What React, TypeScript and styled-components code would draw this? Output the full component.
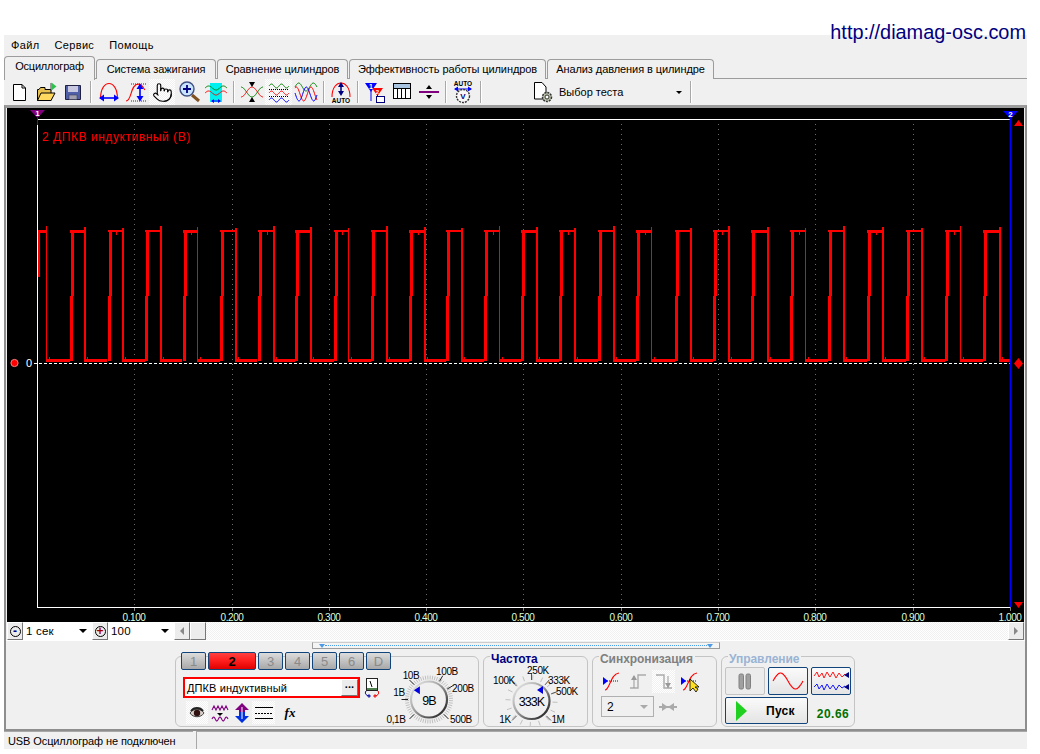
import styled, { createGlobalStyle } from "styled-components";
import { Pointer } from "lucide-react";

const GlobalStyle = createGlobalStyle`
    html, body {
        margin: 0;
        padding: 0;
        background: #fff;
        font-family: "Liberation Sans", Arial, sans-serif;
        font-size: 11px;
        color: #000;
    }
    * {
        box-sizing: border-box;
    }
`

const dither = `repeating-conic-gradient(#f0f0f0 0 25%, #fff 0 50%) 0 0 / 2px 2px`

const TopStrip = styled.div`
    height: 35px;
    display: flex;
    justify-content: flex-end;
    padding: 23px 14px 0 0;
    position: relative;
    z-index: 1;
`

const SiteLink = styled.a`
    font-size: 19.9px;
    line-height: 18px;
    height: 18px;
    color: #000080;
`

const Window = styled.div`
    width: 1023px;
    margin-left: 4px;
    background: #f0f0f0;
`

const MenuBar = styled.div`
    height: 21px;
    display: flex;
    align-items: center;
    gap: 15px;
    padding: 0 0 2px 7px;
`

const MenuItem = styled.span`
    font-size: 11px;
    letter-spacing: 0.35px;
`

const TabRow = styled.div`
    height: 23px;
    display: flex;
    align-items: flex-end;
    gap: 1px;
`

const Tab = styled.div<{ $w: number; $active?: boolean }>`
    width: ${p => p.$w}px;
    height: ${p => (p.$active ? 24 : 20)}px;
    margin-bottom: ${p => (p.$active ? -1 : 0)}px;
    border: 1px solid #9c9c9c;
    border-bottom: none;
    border-radius: 4px 4px 0 0;
    background: #f0f0f0;
    display: flex;
    align-items: center;
    justify-content: center;
    font-size: 11px;
    letter-spacing: ${p => (p.$active ? -0.2 : -0.08)}px;
    padding-bottom: ${p => (p.$active ? 5 : 2)}px;
    position: relative;
`

const ToolBar = styled.div`
    height: 27px;
    margin-top: -1px;
    border-top: 1px solid #9c9c9c;
    display: flex;
    align-items: center;
    padding-left: 1px;
`

const ToolButton = styled.div<{ $pressed?: boolean; $w?: number }>`
    width: ${p => p.$w ?? 27}px;
    height: 26px;
    flex: none;
    display: flex;
    align-items: center;
    justify-content: center;
    background: ${p => (p.$pressed ? dither : "transparent")};
`

const Separator = styled.div<{ $w: number }>`
    width: ${p => p.$w}px;
    height: 22px;
    flex: none;
    position: relative;
    &::after {
        content: "";
        display: block;
        width: 1px;
        height: 22px;
        margin: 0 auto;
        background: #a8a8a8;
        box-shadow: 1px 0 0 #fff;
    }
`

const TestPicker = styled.div`
    width: 205px;
    flex: none;
    display: flex;
    align-items: center;
    padding-left: 48px;
    gap: 2px;
    font-size: 11px;
`

const ArrowDown = styled.i<{ $color?: string }>`
    display: block;
    width: 0;
    height: 0;
    border-left: 4px solid transparent;
    border-right: 4px solid transparent;
    border-top: 4px solid ${p => p.$color ?? "#000"};
`

const TestArrow = styled(ArrowDown)`
    margin-left: 51px;
    border-left-width: 3px;
    border-right-width: 3px;
    border-top-width: 3px;
`

const Frame = styled.div`
    height: 626px;
    border: 2px solid #8e8e8e;
    border-top: 3px solid #9c9c9c;
    display: flex;
    flex-direction: column;
`

const ScopeWrap = styled.div`
    height: 514px;
    padding-left: 1px;
    flex: none;
`

const ScopeSvg = styled.svg`
    display: block;
`

const TimeBar = styled.div`
    height: 18px;
    margin-left: 1px;
    width: 1017px;
    display: flex;
    flex: none;
    background: ${dither};
`

const SquareButton = styled.div`
    width: 16px;
    height: 18px;
    flex: none;
    background: #ececec;
    border: 1px solid;
    border-color: #fff #777 #777 #fff;
    display: flex;
    align-items: center;
    justify-content: center;
`

const Combo = styled.div<{ $w: number }>`
    width: ${p => p.$w}px;
    flex: none;
    background: #fff;
    display: flex;
    align-items: center;
    justify-content: space-between;
    padding: 0 5px 0 3px;
    font-size: 11.5px;
    letter-spacing: 0.2px;
`

const ScrollSpacer = styled.div`
    flex: 1;
`

const RoundGlyph = styled.span<{ $color: string }>`
    width: 11px;
    height: 11px;
    border: 1px solid #000;
    border-radius: 50%;
    color: ${p => p.$color};
    font-size: 12px;
    font-weight: 700;
    line-height: 8px;
    text-align: center;
`

const Triangle = styled.i<{ $dir: "left" | "right" }>`
    display: block;
    width: 0;
    height: 0;
    border-top: 4px solid transparent;
    border-bottom: 4px solid transparent;
    border-${p => (p.$dir === "left" ? "right" : "left")}: 4px solid #888;
`

const Panel = styled.div`
    flex: 1;
    border-top: 1px solid #fff;
    display: flex;
    flex-direction: column;
`

const Splitter = styled.div`
    width: 408px;
    height: 7px;
    margin: 1px 0 0 306px;
    border: 1px solid #9c9c9c;
    border-top-color: #ccc;
    background: #f4f4f4;
    display: flex;
    align-items: center;
    justify-content: space-between;
    padding: 0 6px;
    position: relative;
    &::before {
        content: "";
        position: absolute;
        left: 12px;
        right: 12px;
        top: 2px;
        border-top: 1px dotted #4d9be8;
    }
`

const BlueDown = styled(ArrowDown)`
    border-left-width: 3px;
    border-right-width: 3px;
`

const GroupRow = styled.div`
    display: flex;
    gap: 4px;
    padding: 7px 0 0 169px;
`

const Group = styled.div<{ $w: number }>`
    width: ${p => p.$w}px;
    height: 71px;
    border: 1px solid #c4c4c4;
    border-radius: 6px;
    position: relative;
    display: flex;
`

const Legend = styled.span<{ $color: string }>`
    position: absolute;
    left: 6px;
    top: -4px;
    padding: 0 2px 0 1px;
    background: #f0f0f0;
    color: ${p => p.$color};
    font-size: 12px;
    line-height: 13px;
    font-weight: 700;
    letter-spacing: -0.05px;
`

const ChannelColumn = styled.div`
    width: 209px;
    flex: none;
    margin-top: -5px;
    padding-left: 5px;
`

const ChannelTabs = styled.div`
    display: flex;
    gap: 2px;
`

const ChannelTab = styled.div<{ $active?: boolean; $w: number }>`
    width: ${p => p.$w}px;
    height: 18px;
    flex: none;
    border: 1px solid #10447a;
    border-radius: 2px;
    background: ${p =>
        p.$active
            ? "linear-gradient(#ff4040, #ff2020 45%, #e00000)"
            : "linear-gradient(#dcdcdc, #a8a8a8)"};
    color: ${p => (p.$active ? "#000" : "#8a8a8a")};
    font-size: 13px;
    font-weight: ${p => (p.$active ? 700 : 400)};
    display: flex;
    align-items: center;
    justify-content: center;
`

const NameRow = styled.div`
    display: flex;
    align-items: center;
    margin: 7px 0 0 2px;
    gap: 4px;
`

const NameInput = styled.div`
    width: 177px;
    height: 21px;
    flex: none;
    border: 2px solid #f00;
    background: #fff;
    display: flex;
    align-items: center;
    justify-content: space-between;
    padding: 0 0 0 2px;
    font-size: 11px;
    letter-spacing: 0.1px;
`

const DotsButton = styled.div`
    width: 17px;
    height: 17px;
    background: #ececec;
    border: 1px solid;
    border-color: #fff #777 #777 #fff;
    font-size: 11px;
    font-weight: 700;
    line-height: 9px;
    text-align: center;
`

const ChannelTools = styled.div`
    display: flex;
    align-items: center;
    margin: 3px 0 0 5px;
    height: 23px;
`

const SmallTool = styled.div<{ $w: number; $pressed?: boolean }>`
    width: ${p => p.$w}px;
    height: 23px;
    flex: none;
    display: flex;
    align-items: center;
    justify-content: center;
    background: ${p => (p.$pressed ? dither : "transparent")};
`

const KnobSvg = styled.svg<{ $top: number }>`
    display: block;
    flex: none;
    margin-top: ${p => p.$top}px;
`

const SyncBody = styled.div`
    padding: 13px 0 0 8px;
`

const SyncIcons = styled.div`
    display: flex;
    gap: 4px;
    height: 23px;
    align-items: center;
`

const SyncControls = styled.div`
    display: flex;
    align-items: center;
    gap: 5px;
    margin-top: 3px;
`

const SyncCombo = styled.div`
    width: 53px;
    height: 21px;
    border: 1px solid #b0b0b0;
    display: flex;
    align-items: center;
    justify-content: space-between;
    padding: 0 5px 0 5px;
    font-size: 12px;
`

const ControlBody = styled.div`
    padding: 10px 0 0 3px;
    display: grid;
    grid-template-columns: 40px 40px 40px;
    grid-template-rows: 28px 27px;
    column-gap: 3px;
    row-gap: 2px;
`

const ControlButton = styled.div<{ $muted?: boolean; $span?: boolean }>`
    border: 1px solid ${p => (p.$muted ? "#c4c4c4" : "#10447a")};
    border-radius: 2px;
    background: ${p => (p.$muted ? "#ececec" : "linear-gradient(#fafafa, #e4e4e4)")};
    grid-column: ${p => (p.$span ? "span 2" : "auto")};
    display: flex;
    align-items: center;
    justify-content: center;
`

const StartButton = styled(ControlButton)`
    justify-content: flex-start;
    padding: 1px 0 0 10px;
    gap: 19px;
    font-size: 12px;
    font-weight: 700;
    letter-spacing: 0.3px;
`

const FrameRate = styled.div`
    display: flex;
    align-items: flex-end;
    justify-content: center;
    color: #007000;
    font-size: 12px;
    font-weight: 700;
    letter-spacing: 0.5px;
    padding: 0 0 3px 4px;
`

const StatusBar = styled.div`
    height: 18px;
    display: flex;
    background: #f0f0f0;
`

const StatusCell = styled.div<{ $w?: number }>`
    width: ${p => (p.$w ? `${p.$w}px` : "auto")};
    flex: ${p => (p.$w ? "none" : 1)};
    margin-right: ${p => (p.$w ? 3 : 0)}px;
    border-top: 1px solid #a8a8a8;
    border-left: ${p => (p.$w ? "none" : "1px solid #a8a8a8")};
    padding: 2px 0 0 4px;
    font-size: 11px;
    letter-spacing: -0.1px;
    line-height: 14px;
`

const rises = [70, 107.5, 145, 182.5, 220, 257.7, 295, 334, 371, 409, 446, 484, 521, 559, 598, 636, 675, 713, 751, 790, 828, 867, 906, 945, 983]
const falls = [46.3, 84.3, 122.3, 160.3, 197.3, 235.3, 272.7, 310.3, 348.3, 386.3, 423.7, 461.3, 499, 536, 574, 612.7, 651.3, 690.3, 728.3, 766.7, 805.3, 843.3, 882.3, 921.3, 960.3, 999.3]
const grid = [134, 232, 329, 426, 523, 621, 718, 815, 913, 1010]

const Trace = () => (
    <g fill="#f00" shapeRendering="crispEdges">
        <rect x={38} y={230} width={2} height={47} />
        <rect x={38} y={230} width={8} height={3} />
        {falls.map((f, i) => {
            const start = i === 0 ? 38 : rises[i - 1]
            const end = rises[i] ?? 1010
            const thin = i % 4 === 0
            return (
                <g key={f}>
                    {i > 0 && (
                        <>
                            <rect x={Math.round(start)} y={230} width={f - start} height={i % 3 === 1 ? 3 : 2} />
                            <rect x={Math.round(start) + 1} y={230} width={3} height={66} />
                            <rect x={Math.round(start)} y={296} width={3} height={65} />
                        </>
                    )}
                    <rect x={Math.round(f)} y={226 + (i % 3)} width={thin ? 1 : 2} height={135 - (i % 3)} />
                    <rect x={Math.round(f)} y={359} width={end - f} height={3} />
                    <rect x={Math.round(f) + 3} y={357} width={1} height={3} />
                    {i > 0 && i % 2 === 0 && <rect x={Math.round(f) - 6} y={232} width={1} height={3} />}
                </g>
            )
        })}
    </g>
)

const Scope = () => (
    <ScopeSvg width={1017} height={514} viewBox="7 108 1017 514">
        <rect x={7} y={108} width={1017} height={514} fill="#000" />
        {grid.map(x => (
            <g key={x}>
                <line x1={x + 0.5} x2={x + 0.5} y1={124} y2={607} stroke="#6a6a6a" strokeDasharray="1 4" shapeRendering="crispEdges" />
                <line x1={x + 0.5} x2={x + 0.5} y1={607} y2={611} stroke="#808080" shapeRendering="crispEdges" />
            </g>
        ))}
        <g stroke="#fff" shapeRendering="crispEdges">
            <line x1={37.5} x2={1010} y1={119.5} y2={119.5} />
            <line x1={37.5} x2={1010} y1={607.5} y2={607.5} />
            <line x1={37.5} x2={37.5} y1={119} y2={608} />
        </g>
        <Trace />
        <line x1={34} x2={1010} y1={363.5} y2={363.5} stroke="#fff" strokeDasharray="3 2" shapeRendering="crispEdges" />
        <line x1={1010.5} x2={1010.5} y1={116} y2={607} stroke="#0000ff" strokeWidth={1.6} />
        <line x1={37.5} x2={37.5} y1={112} y2={125} stroke="#800080" />
        <polygon points="30,110 45,110 37.5,118" fill="#800080" />
        <text x={37.5} y={116} fill="#fff" fontSize={8} fontWeight={700} textAnchor="middle">1</text>
        <polygon points="1003,111 1018,111 1010.5,119" fill="#0000ff" />
        <text x={1010.5} y={117} fill="#fff" fontSize={8} fontWeight={700} textAnchor="middle">2</text>
        <polygon points="1018.5,120 1023,126 1014,126" fill="#f00" />
        <polygon points="1014,602 1023,602 1018.5,608" fill="#f00" />
        <polygon points="1018.5,358 1023,363.5 1018.5,369 1014,363.5" fill="#f00" />
        <circle cx={14.5} cy={363} r={3.6} fill="#f00" stroke="#ff8080" />
        <text x={29} y={367} fill="#fff" fontSize={11} textAnchor="middle">0</text>
        <text x={42} y={141} fill="#f00" fontSize={12} letterSpacing={0.55}>2 ДПКВ индуктивный (В)</text>
        {grid.map((x, i) => (
            <text key={x} x={x} y={621} fill="#dcffdc" fontSize={10} letterSpacing={-0.4} textAnchor="middle">
                {((i + 1) / 10).toFixed(3)}
            </text>
        ))}
    </ScopeSvg>
)

const wave = (x0: number, x1: number, y: number, amp: number, periods: number, phase = 0) => {
    const pts: string[] = []
    for (let x = x0; x <= x1; x += 0.5) {
        const t = (x - x0) / (x1 - x0)
        pts.push(`${x},${(y - amp * Math.sin(t * periods * Math.PI * 2 + phase)).toFixed(1)}`)
    }
    return "M" + pts.join("L")
}

const Ico = styled.svg`
    display: block;
    flex: none;
    overflow: visible;
`

const Icon = ({ children, w = 24, h = 24 }: { children: React.ReactNode; w?: number; h?: number }) => (
    <Ico width={w} height={h} viewBox={`0 0 ${w} ${h}`} fill="none">{children}</Ico>
)

const NewIcon = () => (
    <Icon>
        <path d="M6.5 4.5H15L18.5 8V20.5H6.5Z" fill="#fff" stroke="#000" />
        <path d="M15 4.5V8H18.5" stroke="#000" />
    </Icon>
)

const OpenIcon = () => (
    <Icon>
        <path d="M3.5 20.5V9.5H5L6.5 7.5H11V9.5H17V20.5Z" fill="#e8c050" stroke="#000" />
        <path d="M3.5 20.5L7 13H21L17 20.5Z" fill="#ffd860" stroke="#000" />
        <path d="M17 3V11" stroke="#444" />
        <path d="M17.5 2.5L22.5 6.5L17.5 10.5Z" fill="#30c050" />
    </Icon>
)

const SaveIcon = () => (
    <Icon>
        <path d="M4.5 5.5H19.5V19.5H4.5Z" fill="#5060a8" stroke="#202040" />
        <rect x={7} y={6} width={10} height={6} fill="#c8c8e0" />
        <rect x={8} y={15} width={8} height={4.5} fill="#a0a0b0" stroke="#303050" strokeWidth={0.5} />
    </Icon>
)

const WidthIcon = () => (
    <Icon>
        <path d="M3.5 19C3.5 8 8 3.5 12 3.5S20.5 8 20.5 19" stroke="#f00" strokeWidth={1.1} />
        <path d="M5 18H19" stroke="#00f" strokeWidth={1.6} />
        <path d="M2 18L7 14.5V21.5ZM22 18L17 14.5V21.5Z" fill="#00f" />
    </Icon>
)

const HeightIcon = () => (
    <Icon>
        <path d="M2 21C8 21 6 5 14 4C18 4 18 6 21 10" stroke="#f00" strokeWidth={1.1} />
        <path d="M7 4H22M7 21H22" stroke="#333" strokeDasharray="1 1" />
        <path d="M16 7V18" stroke="#00f" strokeWidth={1.6} />
        <path d="M16 3.5L12.5 9H19.5ZM16 21.5L12.5 16H19.5Z" fill="#00f" />
    </Icon>
)

const LensIcon = () => (
    <Icon>
        <path d="M15 15L22 21" stroke="#805020" strokeWidth={3} />
        <circle cx={10} cy={9} r={7} fill="#c8e4ff" stroke="#405080" strokeWidth={1.4} />
        <path d="M6 9H14M10 5V13" stroke="#000080" strokeWidth={1.8} />
    </Icon>
)

const WindowIcon = () => (
    <Icon>
        <rect x={6} y={3} width={12} height={19} fill="#00f0f0" />
        <path d={wave(1, 23, 8, 2, 1.5, 0)} stroke="#008000" />
        <path d={wave(1, 23, 13, 2, 1.5, 0)} stroke="#f00" />
        <path d="M8 21H16" stroke="#00f" />
        <path d="M7 21L10 19V23ZM17 21L14 19V23Z" fill="#00f" />
    </Icon>
)

const CrossIcon = () => (
    <Icon>
        <path d={wave(1, 23, 12, 5, 1, Math.PI / 2)} stroke="#008000" />
        <path d={wave(1, 23, 12, 5, 1, -Math.PI / 2)} stroke="#f00" />
        <path d="M12 7L9 2H15ZM12 17L9 22H15Z" fill="#000" />
    </Icon>
)

const StackIcon = () => (
    <Icon>
        <path d={wave(2, 22, 6, 2, 2)} stroke="#008000" />
        <path d={wave(2, 22, 13, 2, 2)} stroke="#f00" />
        <path d={wave(2, 22, 20, 2, 2)} stroke="#00f" />
        <path d="M2 9.5H22M2 16.5H22" stroke="#000" strokeDasharray="1 1" />
    </Icon>
)

const OverlayIcon = () => (
    <Icon>
        <path d={wave(1, 23, 7, 4, 1.5)} stroke="#008000" />
        <path d={wave(1, 23, 14, 7, 1.5, 1)} stroke="#f00" />
        <path d={wave(1, 23, 14, 7, 1.5, 3)} stroke="#00f" />
    </Icon>
)

const AutoHeightIcon = () => (
    <Icon>
        <path d="M3 17C3 7 8 3 12 3S21 7 21 17" stroke="#f00" strokeWidth={1.1} />
        <path d="M12 5V14" stroke="#000080" strokeWidth={1.5} />
        <path d="M12 2L9 7H15ZM12 16L9 11H15Z" fill="#000080" />
        <text x={12} y={23} fontSize={6.5} fontWeight={700} textAnchor="middle" fill="#000">AUTO</text>
    </Icon>
)

const MarkerIcon = () => (
    <Icon>
        <path d="M2 3H14L8 12Z" fill="#00f" />
        <path d="M9 8H20L14.5 16Z" fill="#f00" />
        <path d="M8 11V21M14.5 15V21" stroke="#00f" />
        <rect x={13.5} y={16.5} width={8} height={6} fill="#fff" stroke="#000080" />
        <text x={8} y={9} fontSize={7} fontWeight={700} fill="#fff" textAnchor="middle">1</text>
        <text x={14.5} y={13.5} fontSize={6} fontWeight={700} fill="#fff" textAnchor="middle">2</text>
    </Icon>
)

const TableIcon = () => (
    <Icon>
        <rect x={3.5} y={3.5} width={17} height={15} fill="#fff" stroke="#000" shapeRendering="crispEdges" />
        <rect x={4} y={4} width={16} height={4} fill="#a8c4e0" />
        <path d="M7.5 8V18M11.5 8V18M15.5 8V18M3 8.5H21" stroke="#000" shapeRendering="crispEdges" />
    </Icon>
)

const DividerIcon = () => (
    <Icon>
        <path d="M2 12H22" stroke="#800080" strokeWidth={2} shapeRendering="crispEdges" />
        <path d="M12 5L9 9H15ZM12 19L9 15H15Z" fill="#000" />
    </Icon>
)

const AutoScaleIcon = () => (
    <Icon>
        <text x={12} y={6} fontSize={6.5} fontWeight={700} textAnchor="middle" fill="#000">AUTO</text>
        <path d="M4 9H20" stroke="#00f" />
        <path d="M3 9L7 6.5V11.5ZM21 9L17 6.5V11.5Z" fill="#00f" />
        <circle cx={12} cy={16} r={6.5} fill="#f8f8f8" stroke="#333" strokeWidth={1.4} strokeDasharray="2 1" />
        <text x={12} y={19} fontSize={8} fontWeight={700} textAnchor="middle" fill="#000080">V</text>
    </Icon>
)

const TestIcon = () => (
    <Icon w={24} h={24}>
        <path d="M1.5 2.5H9L13 7V19H1.5Z" fill="#fff" stroke="#000" />
        <circle cx={14} cy={17} r={4.5} fill="#b8c0a8" stroke="#333" strokeWidth={1.5} strokeDasharray="2 1" />
        <circle cx={14} cy={17} r={2} fill="#fff" stroke="#333" />
    </Icon>
)

const EyeIcon = () => (
    <Icon w={18} h={16}>
        <path d="M2 8C5 3 13 3 16 8C13 13 5 13 2 8Z" fill="#d8d0c8" stroke="#444" />
        <circle cx={9} cy={8} r={3.2} fill="#301010" />
        <path d="M3 6C6 2 12 2 15 6" stroke="#222" strokeWidth={2} />
    </Icon>
)

const ZigzagIcon = () => (
    <Icon w={20} h={22}>
        <path d="M2 8L4 4L6 8L8 4L10 8L12 4L14 8L16 4L18 8" stroke="#800080" strokeWidth={1.1} />
        <path d={wave(2, 18, 17, 2, 2.5)} stroke="#800080" strokeWidth={1.1} />
        <path d="M7 11H13L10 14Z" fill="#000" />
    </Icon>
)

const UpDownIcon = () => (
    <Icon w={16} h={22}>
        <path d="M8 1L15 8H11V12H5V8H1Z" fill="#800080" />
        <path d="M8 21L15 14H11V10H5V14H1Z" fill="#0030e0" />
        <path d="M8 5V17" stroke="#fff" />
    </Icon>
)

const LinesIcon = () => (
    <Icon w={20} h={16}>
        <path d="M1 2.5H19M1 13.5H19" stroke="#000" shapeRendering="crispEdges" />
        <path d="M1 8.5H19" stroke="#000" strokeDasharray="2 1" shapeRendering="crispEdges" />
    </Icon>
)

const MeterIcon = () => (
    <Icon w={17} h={20}>
        <rect x={2.5} y={0.5} width={11} height={12} fill="#fff" stroke="#222" />
        <path d="M3 10H13V12H3Z" fill="#508050" />
        <path d="M8 9L6 3" stroke="#000" />
        <path d="M2 13C0 16 3 18 6 18" stroke="#00a" />
        <path d="M14 13C16 16 13 18 10 18" stroke="#e00" />
        <path d="M3 18H7M5 16V20" stroke="#00a" strokeWidth={0.8} />
        <path d="M9 18H13M11 16V20" stroke="#e00" strokeWidth={0.8} />
    </Icon>
)

const TriggerIcon = ({ cursor }: { cursor?: boolean }) => (
    <Icon w={20} h={22}>
        <path d="M3 19C8 19 8 3 17 2" stroke="#f00" strokeWidth={1.1} />
        <path d="M1 10H17" stroke="#00f" strokeDasharray="1 1" />
        <path d="M1 6V14L6 10Z" fill="#00f" />
        {cursor && <path d="M10 8V20L13 17L16 21L18 18L15 16H19Z" fill="#ffe020" stroke="#000" strokeWidth={0.8} />}
    </Icon>
)

const StepIcon = ({ down }: { down?: boolean }) => (
    <Icon w={20} h={20}>
        <path d={down ? "M2 3H10V16H18" : "M2 16H10V3H18"} stroke="#aaa" strokeWidth={1.4} />
        <path d="M6 4V16" stroke="#999" transform={down ? "translate(8)" : undefined} />
        <path d={down ? "M14 16L11 11H17Z" : "M6 3L3 8H9Z"} fill="#999" />
    </Icon>
)

const SqueezeIcon = () => (
    <Icon w={18} h={10}>
        <path d="M0 5H18" stroke="#aaa" strokeWidth={2} />
        <path d="M9 5L3 1V9ZM9 5L15 1V9Z" fill="#aaa" />
    </Icon>
)

const SineIcon = () => (
    <Icon w={32} h={22}>
        <path d={wave(1, 31, 11, 8, 1)} stroke="#f00" strokeWidth={1.2} />
    </Icon>
)

const MultiWaveIcon = () => (
    <Icon w={36} h={24}>
        <path d="M1 7L4 3L6 8L9 4L11 9L14 3L17 8L20 3L23 9L26 4L29 8L32 5" stroke="#f00" strokeWidth={0.9} />
        <path d="M1 18L4 15L6 20L9 16L11 21L14 15L17 20L20 16L23 21L26 16L29 19L32 17" stroke="#00f" strokeWidth={0.9} />
        <path d="M36 3V9L31 6ZM36 15V21L31 18Z" fill="#000080" />
    </Icon>
)

const PauseIcon = () => (
    <Icon w={14} h={18}>
        <rect x={1} y={2} width={4.5} height={15} rx={1.5} fill="#a0a0a0" stroke="#808080" />
        <rect x={8} y={2} width={4.5} height={15} rx={1.5} fill="#a0a0a0" stroke="#808080" />
    </Icon>
)

const PlayIcon = () => (
    <Icon w={11} h={20}>
        <path d="M0 0L11 10L0 20Z" fill="#20d020" />
    </Icon>
)

type KnobLabel = { x: number; y: number; text: string }

const Knob = ({ x, y, w, h, cx, cy, id, value, labels, marks, hatch, pointer }: {
    x: number
    y: number
    w: number
    h: number
    cx: number
    cy: number
    id: string
    value: string
    labels: KnobLabel[]
    marks: number[]
    hatch?: boolean
    pointer: number
}) => {
    const tick = (deg: number, r1: number, r2: number) => {
        const a = (deg * Math.PI) / 180
        return { x1: cx + r1 * Math.cos(a), y1: cy + r1 * Math.sin(a), x2: cx + r2 * Math.cos(a), y2: cy + r2 * Math.sin(a) }
    }
    const count = hatch ? 60 : 16
    const minor = Array.from({ length: count }, (_, i) => (i * 360) / count + 3)
    const p = (pointer * Math.PI) / 180
    const px = cx + 14.5 * Math.cos(p)
    const py = cy + 14.5 * Math.sin(p)
    return (
        <KnobSvg $top={y - 658} width={w} height={h} viewBox={`${x} ${y} ${w} ${h}`}>
            <defs>
                <linearGradient id={id} x1="0" y1="0" x2="1" y2="1">
                    <stop offset="0" stopColor="#f0f0f0" />
                    <stop offset="0.45" stopColor="#a0a0a0" />
                    <stop offset="1" stopColor="#101010" />
                </linearGradient>
            </defs>
            {minor.map(d => (
                <line key={d} {...tick(d, hatch ? 20 : 21, hatch ? 24 : 26)} stroke="#c0c0c0" />
            ))}
            {marks.map(d => (
                <line key={d} {...tick(d, 21, 27.5)} stroke={hatch ? "#222" : "#555"} />
            ))}
            <circle cx={cx} cy={cy} r={18} fill="#f0f0f0" stroke={`url(#${id})`} strokeWidth={2.2} />
            <polygon points={`${px - 4},${py} ${px + 2},${py - 4} ${px + 2},${py + 4}`} fill="#0000e0" />
            <text x={cx} y={cy + 5} fontSize={12.5} textAnchor="middle" fill="#000" letterSpacing={-0.9}>{value}</text>
            {labels.map(l => (
                <text key={l.text} x={l.x} y={l.y} fontSize={10} letterSpacing={-0.4} textAnchor="middle" fill="#000">{l.text}</text>
            ))}
        </KnobSvg>
    )
}

const channels = [
    { name: "1", w: 25 },
    { name: "2", w: 48, active: true },
    { name: "3", w: 25 },
    { name: "4", w: 25 },
    { name: "5", w: 25 },
    { name: "6", w: 25 },
    { name: "D", w: 25 },
]

export default function App() {
    return (
        <>
            <GlobalStyle />
            <TopStrip>
                <SiteLink>http://diamag-osc.com</SiteLink>
            </TopStrip>
            <Window>
                <MenuBar>
                    <MenuItem>Файл</MenuItem>
                    <MenuItem>Сервис</MenuItem>
                    <MenuItem>Помощь</MenuItem>
                </MenuBar>
                <TabRow>
                    <Tab $w={91} $active>Осциллограф</Tab>
                    <Tab $w={120}>Система зажигания</Tab>
                    <Tab $w={131}>Сравнение цилиндров</Tab>
                    <Tab $w={197}>Эффективность работы цилиндров</Tab>
                    <Tab $w={167}>Анализ давления в цилиндре</Tab>
                </TabRow>
                <ToolBar>
                    <ToolButton><NewIcon /></ToolButton>
                    <ToolButton><OpenIcon /></ToolButton>
                    <ToolButton><SaveIcon /></ToolButton>
                    <Separator $w={9} />
                    <ToolButton><WidthIcon /></ToolButton>
                    <ToolButton><HeightIcon /></ToolButton>
                    <ToolButton $pressed $w={26}><Pointer size={21} strokeWidth={1.3} color="#000" /></ToolButton>
                    <ToolButton $w={27}><LensIcon /></ToolButton>
                    <ToolButton><WindowIcon /></ToolButton>
                    <Separator $w={9} />
                    <ToolButton><CrossIcon /></ToolButton>
                    <ToolButton $pressed><StackIcon /></ToolButton>
                    <ToolButton><OverlayIcon /></ToolButton>
                    <Separator $w={8} />
                    <ToolButton><AutoHeightIcon /></ToolButton>
                    <Separator $w={7} />
                    <ToolButton><MarkerIcon /></ToolButton>
                    <ToolButton><TableIcon /></ToolButton>
                    <ToolButton><DividerIcon /></ToolButton>
                    <Separator $w={7} />
                    <ToolButton><AutoScaleIcon /></ToolButton>
                    <Separator $w={9} />
                    <TestPicker>
                        <TestIcon />
                        Выбор теста
                        <TestArrow />
                    </TestPicker>
                    <Separator $w={1} />
                </ToolBar>
                <Frame>
                    <ScopeWrap><Scope /></ScopeWrap>
                    <TimeBar>
                        <SquareButton><RoundGlyph $color="#000080">-</RoundGlyph></SquareButton>
                        <Combo $w={69}>1 сек<ArrowDown /></Combo>
                        <SquareButton><RoundGlyph $color="#a00000">+</RoundGlyph></SquareButton>
                        <Combo $w={66}>100<ArrowDown /></Combo>
                        <SquareButton><Triangle $dir="left" /></SquareButton>
                        <SquareButton />
                        <ScrollSpacer />
                        <SquareButton><Triangle $dir="right" /></SquareButton>
                    </TimeBar>
                    <Panel>
                        <Splitter>
                            <BlueDown $color="#4d9be8" />
                            <BlueDown $color="#4d9be8" />
                        </Splitter>
                        <GroupRow>
                            <Group $w={304}>
                                <ChannelColumn>
                                    <ChannelTabs>
                                        {channels.map(c => (
                                            <ChannelTab key={c.name} $w={c.w} $active={c.active}>{c.name}</ChannelTab>
                                        ))}
                                    </ChannelTabs>
                                    <NameRow>
                                        <NameInput>
                                            ДПКВ индуктивный
                                            <DotsButton>...</DotsButton>
                                        </NameInput>
                                        <MeterIcon />
                                    </NameRow>
                                    <ChannelTools>
                                        <SmallTool $w={22} $pressed><EyeIcon /></SmallTool>
                                        <SmallTool $w={24}><ZigzagIcon /></SmallTool>
                                        <SmallTool $w={20}><UpDownIcon /></SmallTool>
                                        <SmallTool $w={23} $pressed><LinesIcon /></SmallTool>
                                        <SmallTool $w={30}>
                                            <svg width={16} height={16} viewBox="0 0 16 16">
                                                <text x={8} y={12} fontFamily="Liberation Serif" fontSize={13} fontStyle="italic" fontWeight={700} textAnchor="middle">fx</text>
                                            </svg>
                                        </SmallTool>
                                    </ChannelTools>
                                </ChannelColumn>
                                <Knob
                                    id="volt" x={385} y={665} w={90} h={62} cx={429} cy={700.5}
                                    value="9В" hatch pointer={-140}
                                    marks={[45, 135, 180, -135, -60, -30]}
                                    labels={[
                                        { x: 411, y: 680, text: "10В" },
                                        { x: 447, y: 676, text: "100В" },
                                        { x: 399, y: 697, text: "1В" },
                                        { x: 463, y: 693, text: "200В" },
                                        { x: 396, y: 724, text: "0,1В" },
                                        { x: 461, y: 724, text: "500В" },
                                    ]}
                                />
                            </Group>
                            <Group $w={105}>
                                <Legend $color="#000080">Частота</Legend>
                                <Knob
                                    id="freq" x={484} y={664} w={103} h={63} cx={531.5} cy={702}
                                    value="333K" pointer={-49}
                                    marks={[-90, -135, -50, -20, 135, 45]}
                                    labels={[
                                        { x: 538, y: 675, text: "250K" },
                                        { x: 504, y: 685, text: "100K" },
                                        { x: 559, y: 685, text: "333K" },
                                        { x: 567, y: 696, text: "500K" },
                                        { x: 505, y: 724, text: "1K" },
                                        { x: 558, y: 724, text: "1M" },
                                    ]}
                                />
                            </Group>
                            <Group $w={125}>
                                <Legend $color="#808080">Синхронизация</Legend>
                                <SyncBody>
                                    <SyncIcons>
                                        <SmallTool $w={22}><TriggerIcon /></SmallTool>
                                        <SmallTool $w={21}><StepIcon /></SmallTool>
                                        <SmallTool $w={23} $pressed><StepIcon down /></SmallTool>
                                        <SmallTool $w={22}><TriggerIcon cursor /></SmallTool>
                                    </SyncIcons>
                                    <SyncControls>
                                        <SyncCombo>2<ArrowDown $color="#aaa" /></SyncCombo>
                                        <SqueezeIcon />
                                    </SyncControls>
                                </SyncBody>
                            </Group>
                            <Group $w={134}>
                                <Legend $color="#9ab4d4">Управление</Legend>
                                <ControlBody>
                                    <ControlButton $muted><PauseIcon /></ControlButton>
                                    <ControlButton><SineIcon /></ControlButton>
                                    <ControlButton><MultiWaveIcon /></ControlButton>
                                    <StartButton $span><PlayIcon />Пуск</StartButton>
                                    <FrameRate>20.66</FrameRate>
                                </ControlBody>
                            </Group>
                        </GroupRow>
                    </Panel>
                </Frame>
                <StatusBar>
                    <StatusCell $w={189}>USB Осциллограф не подключен</StatusCell>
                    <StatusCell />
                </StatusBar>
            </Window>
        </>
    )
}
